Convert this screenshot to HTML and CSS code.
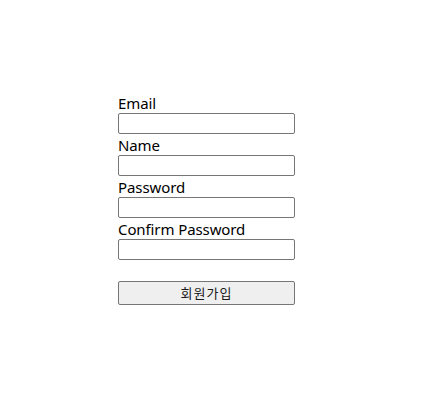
FILE: index.html
```html
<!DOCTYPE html>
<html lang="ko">
<head>
<meta charset="utf-8">
<link rel="stylesheet" href="styles.css">
</head>
<body>
<form class="signup">
  <label class="label" for="email">Email</label>
  <input class="field" id="email" type="email">
  <label class="label" for="name">Name</label>
  <input class="field" id="name" type="text">
  <label class="label" for="pw">Password</label>
  <input class="field" id="pw" type="password">
  <label class="label" for="pw2">Confirm Password</label>
  <input class="field" id="pw2" type="password">
  <button class="submit" type="submit">회원가입</button>
</form>
</body>
</html>
```
FILE: styles.css
```css
html, body {
  margin: 0;
  padding: 0;
  background: #fff;
}
body {
  font-family: "Segoe UI", "Noto Sans", "Noto Sans CJK KR", sans-serif;
  color: #000;
}
.signup {
  display: flex;
  flex-direction: column;
  align-items: flex-start;
  width: 177px;
  padding: 92px 0 0 118px;
  margin: 0;
}
.label {
  display: block;
  font-size: 15px;
  line-height: 22px;
  height: 21px;
  letter-spacing: -0.1px;
}
.field {
  box-sizing: border-box;
  width: 177px;
  height: 21px;
  margin: 0;
  padding: 1px 2px;
  border: 1px solid #767676;
  border-radius: 2px;
  background: #fff;
  font-size: 13px;
}
.submit {
  box-sizing: border-box;
  width: 177px;
  height: 24px;
  margin: 21px 0 0 0;
  padding: 0;
  border: 1px solid #767676;
  border-radius: 2px;
  background: #efefef;
  color: #1a1a1a;
  font-family: "Noto Sans CJK KR", sans-serif;
  font-size: 13px;
  line-height: 20px;
  letter-spacing: 1px;
}
```
